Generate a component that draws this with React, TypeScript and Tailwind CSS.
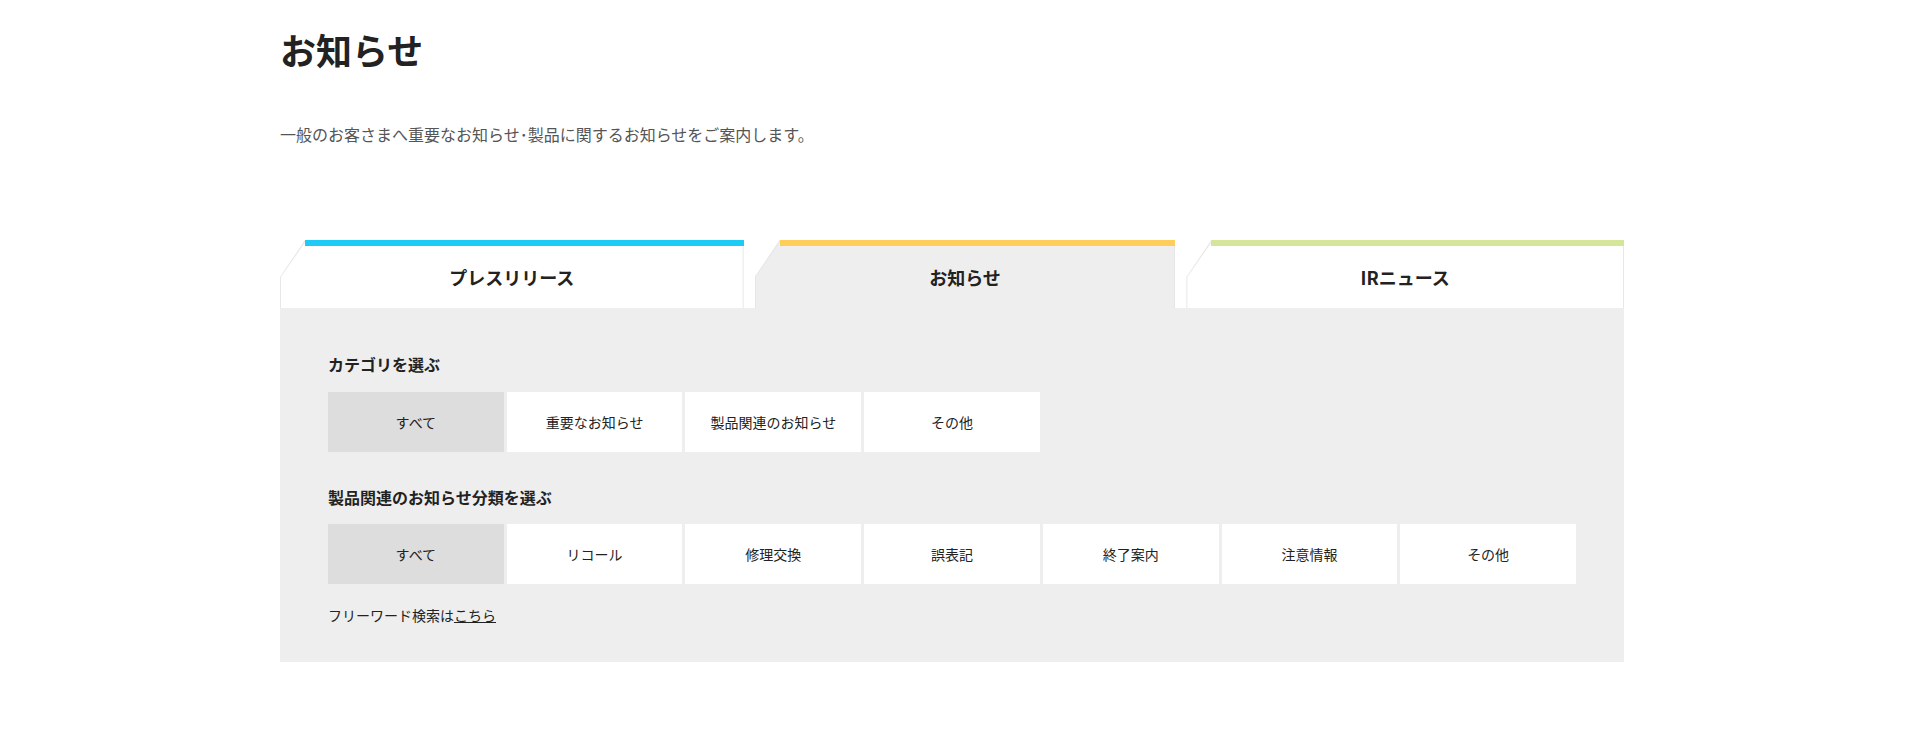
import React from "react";

const Tab = ({ label, color, active, w }: { label: string; color: string; active?: boolean; w: string }) => (
  <div className={`relative h-[68px] ${w}`}>
    <div
      className={`absolute inset-0 ${active ? "bg-[#e6e6e6]" : "bg-[#e8e8e8]"}`}
      style={{ clipPath: "polygon(25px 0, 100% 0, 100% 100%, 0 100%, 0 37px)" }}
    />
    <div
      className={`absolute inset-[1px] bottom-0 ${active ? "bg-[#eeeeee]" : "bg-white"}`}
      style={{ clipPath: "polygon(25px 0, 100% 0, 100% 100%, 0 100%, 0 36px)" }}
    />
    <div className={`absolute left-[25px] right-0 top-0 h-[6px] ${color}`} />
    <div className="absolute left-[10px] top-0 h-[6px] w-[20px]" />
    <div className="relative flex h-full items-center justify-center pt-[6px] text-[18px] font-bold text-[#222]">{label}</div>
  </div>
);

const Btn = ({ label, sel }: { label: string; sel?: boolean }) => (
  <div className={`flex h-[60px] items-center justify-center text-[14px] text-[#222] ${sel ? "bg-[#dddddd]" : "bg-white"}`}>{label}</div>
);

export default function App() {
  return (
    <div className="min-h-[735px] bg-white" style={{ fontFamily: '"Noto Sans CJK JP", "Noto Sans", sans-serif' }}>
      <div className="mx-auto w-[1344px] ml-[280px]">
        <h1 className="mt-[27px] text-[36px] font-bold leading-[44px] text-[#222]">お知らせ</h1>
        <p className="mt-[51px] text-[16px] leading-[24px] text-[#555]">一般のお客さまへ重要なお知らせ･製品に関するお知らせをご案内します。</p>
        <div className="mt-[94px] flex gap-[11px]">
          <Tab label="プレスリリース" color="bg-[#1ecbf5]" w="w-[464px]" />
          <Tab label="お知らせ" color="bg-[#ffcd5a]" active w="w-[421px]" />
          <Tab label="IRニュース" color="bg-[#d5e69b]" w="w-[438px]" />
        </div>
        <div className="bg-[#eeeeee] px-[48px] pb-[36px] pt-[44px]">
          <h2 className="text-[16px] font-bold leading-[24px] text-[#222]">カテゴリを選ぶ</h2>
          <div className="mt-[16px] grid grid-cols-7 gap-[3px]">
            <Btn label="すべて" sel />
            <Btn label="重要なお知らせ" />
            <Btn label="製品関連のお知らせ" />
            <Btn label="その他" />
          </div>
          <h2 className="mt-[33px] text-[16px] font-bold leading-[24px] text-[#222]">製品関連のお知らせ分類を選ぶ</h2>
          <div className="mt-[15px] grid grid-cols-7 gap-[3px]">
            <Btn label="すべて" sel />
            <Btn label="リコール" />
            <Btn label="修理交換" />
            <Btn label="誤表記" />
            <Btn label="終了案内" />
            <Btn label="注意情報" />
            <Btn label="その他" />
          </div>
          <p className="mt-[20px] text-[14px] leading-[22px] text-[#222]">
            フリーワード検索は<span className="underline">こちら</span>
          </p>
        </div>
      </div>
    </div>
  );
}
